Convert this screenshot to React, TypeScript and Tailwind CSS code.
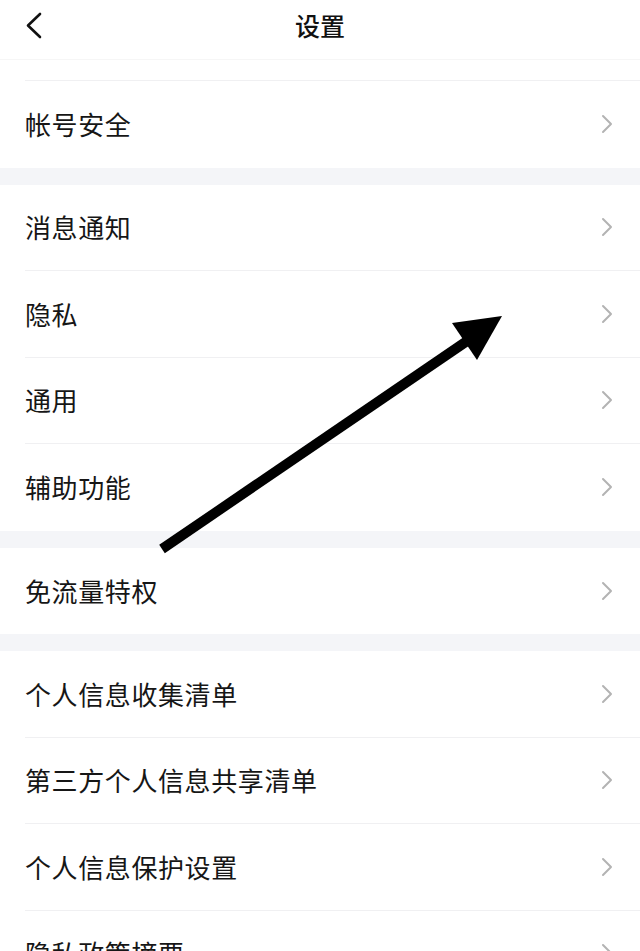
import React from "react";

const font = { fontFamily: '"Noto Sans CJK SC", "Noto Sans", sans-serif' };

function Chevron() {
  return (
    <svg width="12" height="20" viewBox="0 0 12 20" className="shrink-0">
      <path d="M2 2 L10 10 L2 18" fill="none" stroke="#b3b3b3" strokeWidth="2" strokeLinecap="round" strokeLinejoin="round" />
    </svg>
  );
}

function Row({ label, divider = true }: { label: string; divider?: boolean }) {
  return (
    <div className="pl-[25px] bg-white">
      <div className={`h-[86.5px] flex items-center justify-between pr-[27px] ${divider ? "border-b border-[#f0f0f2]" : ""}`}>
        <span className="text-[26px] text-[#161616] leading-none tracking-[0.6px]">{label}</span>
        <Chevron />
      </div>
    </div>
  );
}

function Gap() {
  return <div className="h-[17px] bg-[#f4f5f8]" />;
}

export default function App() {
  return (
    <div className="relative w-[640px] h-[951px] overflow-hidden bg-white" style={font}>
      <div className="h-[60px] flex items-center justify-center relative border-b border-[#f6f6f6]">
        <svg width="20" height="30" viewBox="0 0 20 30" className="absolute left-[24px] top-[11px]">
          <path d="M16 3 L4 14.5 L16 26" fill="none" stroke="#111" strokeWidth="2.6" strokeLinecap="round" strokeLinejoin="round" />
        </svg>
        <span className="text-[25px] font-medium text-[#111] leading-none -mt-[8px]">设置</span>
      </div>
      <div className="h-[21px] pl-[25px]">
        <div className="h-full border-b border-[#f0f0f2]" />
      </div>
      <Row label="帐号安全" divider={false} />
      <Gap />
      <Row label="消息通知" />
      <Row label="隐私" />
      <Row label="通用" />
      <Row label="辅助功能" divider={false} />
      <Gap />
      <Row label="免流量特权" divider={false} />
      <Gap />
      <Row label="个人信息收集清单" />
      <Row label="第三方个人信息共享清单" />
      <Row label="个人信息保护设置" />
      <Row label="隐私政策摘要" />

      <svg width="640" height="951" className="absolute inset-0 pointer-events-none">
        <line x1="162" y1="549" x2="470" y2="339" stroke="#000" strokeWidth="10" />
        <polygon points="452,323 502,316 477,360" fill="#000" />
      </svg>
    </div>
  );
}
